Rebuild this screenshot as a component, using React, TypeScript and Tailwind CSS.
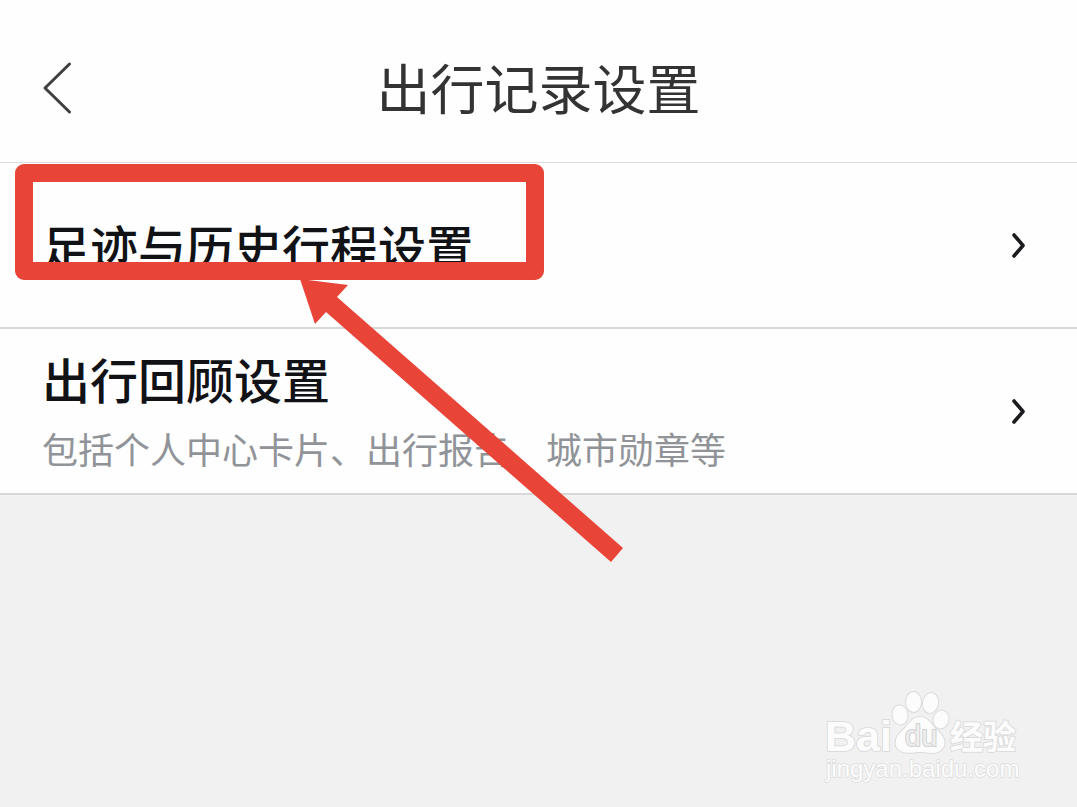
interface SettingRowProps {
    title: string;
    description?: string;
}

const SETTINGS: SettingRowProps[] = [
    { title: "足迹与历史行程设置" },
    { title: "出行回顾设置", description: "包括个人中心卡片、出行报告、城市勋章等" },
];

const SettingRow = ({ title, description }: SettingRowProps) => (
    <button
        type="button"
        className="flex w-full min-h-[166px] items-center justify-between border-b-2 border-[#d8d8d8] bg-[#fefefe] pl-[42px] pr-[51px] text-left"
    >
        <span className="flex flex-col">
            <span className="text-[48px] leading-[74px] font-medium text-[#111216]">{title}</span>
            {description && (
                <span className="text-[36px] leading-[66px] text-[#909398]">{description}</span>
            )}
        </span>
        <svg width="15" height="28" viewBox="0 0 15 28" fill="none" className="shrink-0" aria-hidden="true">
            <path d="M3 4 L12 14.5 L3 25" stroke="#1c1c20" strokeWidth="3.6" strokeLinecap="round" strokeLinejoin="round" />
        </svg>
    </button>
);

const Header = () => (
    <header className="grid h-[163px] grid-cols-[1fr_auto_1fr] items-center border-b border-[#dddddd] bg-[#fefefe] px-10 pt-3">
        <button type="button" aria-label="返回" className="w-9">
            <svg width="36" height="56" viewBox="0 0 36 56" fill="none">
                <path d="M29.5 5 L5 29 L29.5 53" stroke="#3f3f41" strokeWidth="3" strokeLinecap="round" strokeLinejoin="round" />
            </svg>
        </button>
        <h1 className="text-[54px] leading-[80px] font-normal text-[#333333]">出行记录设置</h1>
    </header>
);

/* Marco y flecha que señalan la primera opción */
const Highlight = () => (
    <>
        <div className="pointer-events-none absolute left-[15px] top-[164px] h-[116px] w-[529px] rounded-[9px] border-[18px] border-[#e84538]" />
        <svg
            width="324"
            height="284"
            viewBox="0 0 324 284"
            className="pointer-events-none absolute left-[300px] top-[279px]"
            aria-hidden="true"
        >
            <path d="M0 0 L48 6 L37 18 L323 269 L311 283 L26 33 L15 45 Z" fill="#e84538" />
        </svg>
    </>
);

const Watermark = () => (
    <svg
        width="202"
        height="98"
        viewBox="0 0 202 98"
        className="pointer-events-none absolute bottom-[19px] right-[53px]"
        fill="#fcfcfc"
        stroke="#dcdcdc"
        strokeWidth="2"
        strokeLinejoin="round"
        paintOrder="stroke"
        fontFamily="'Liberation Sans', 'Noto Sans CJK SC', sans-serif"
    >
        <text x="3" y="61" fontSize="43" fontWeight="700">Bai</text>
        <ellipse cx="78" cy="25" rx="7.5" ry="9.5" transform="rotate(-8 78 25)" />
        <ellipse cx="91.5" cy="12" rx="7.5" ry="10" />
        <ellipse cx="108.5" cy="13" rx="7.5" ry="10" transform="rotate(12 108.5 13)" />
        <ellipse cx="119" cy="29.5" rx="7.5" ry="9" transform="rotate(12 119 29.5)" />
        <path d="M98 27 C89 27 86 36 79 42 C73 47 72 55 76 59 C82 65 90 62 98 62 C107 62 115 66 121 58 C125 51 121 46 115 40 C109 35 107 27 98 27 Z" />
        <text x="83" y="56" fontSize="29" fill="#eeeeee" stroke="#d0d0d0" strokeWidth="2">du</text>
        <text x="128" y="59" fontSize="33" fontWeight="700">经验</text>
        <text x="4" y="87" fontSize="24" fontFamily="'Liberation Sans', sans-serif" strokeWidth="1.5">jingyan.baidu.com</text>
    </svg>
);

export default function App() {
    return (
        <div
            lang="zh-CN"
            className="relative min-h-screen overflow-hidden bg-[#f1f1f1] font-['Noto_Sans_CJK_SC',sans-serif]"
        >
            <Header />
            <main>
                {SETTINGS.map((item) => (
                    <SettingRow key={item.title} {...item} />
                ))}
            </main>
            <Highlight />
            <Watermark />
        </div>
    );
}
